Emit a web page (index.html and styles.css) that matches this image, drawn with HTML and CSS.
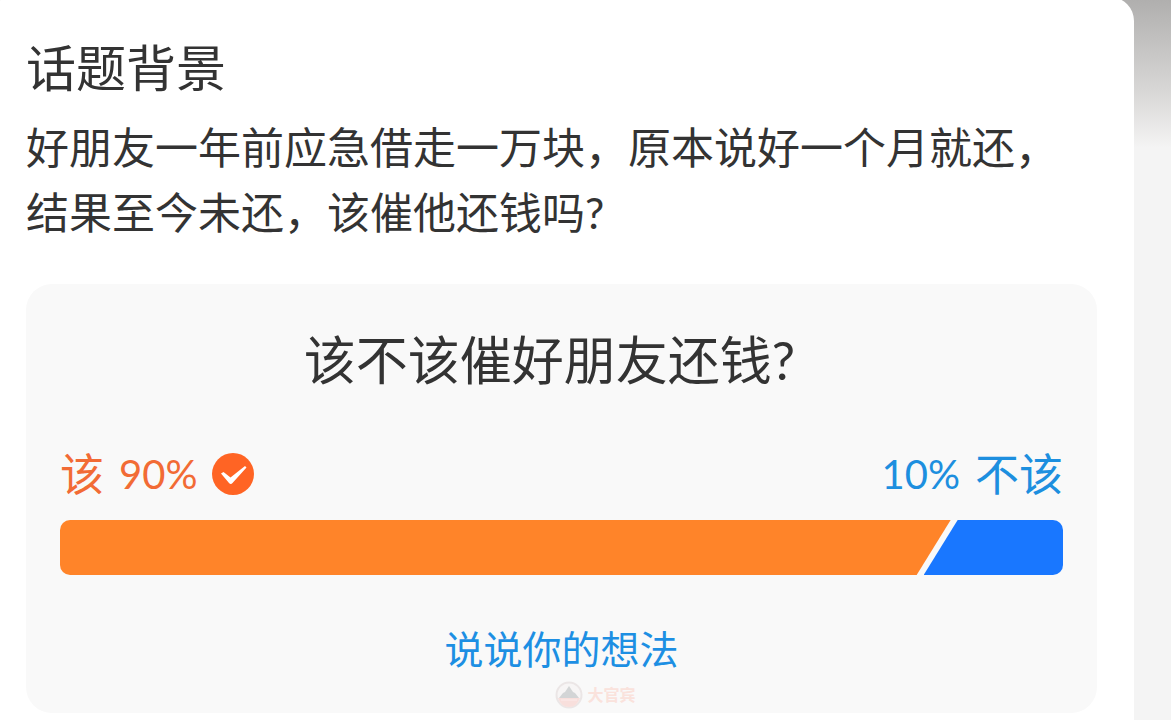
FILE: index.html
```html
<!DOCTYPE html>
<html lang="zh-CN">
<head>
<meta charset="utf-8">
<meta name="viewport" content="width=device-width, initial-scale=1">
<title>话题背景</title>
<link rel="stylesheet" href="styles.css">
</head>
<body>
<main class="card">
  <h1 class="card-title">话题背景</h1>
  <p class="card-text">好朋友一年前应急借走一万块，原本说好一个月就还，结果至今未还，该催他还钱吗?</p>
  <section class="poll">
    <h2 class="poll-title">该不该催好朋友还钱?</h2>
    <div class="labels">
      <div class="label label-yes">
        <span>该</span>
        <span class="percent">90%</span>
        <svg class="check" viewBox="0 0 42 42" aria-hidden="true">
          <circle cx="21" cy="21" r="21" fill="#ff6424"/>
          <path d="M9 20.500 L11.500 19 L18.500 24.500 L33 13 L34.500 14.500 L20.500 30 Q18.800 32 17 30 Z" fill="#fff"/>
        </svg>
      </div>
      <div class="label label-no">
        <span class="percent">10%</span>
        <span>不该</span>
      </div>
    </div>
    <div class="bar">
      <div class="bar-yes" style="width: 88.8%"></div>
      <div class="bar-no"></div>
    </div>
    <a class="link" href="#">说说你的想法</a>
    <div class="mark">
      <svg class="mark-logo" viewBox="0 0 28 28" aria-hidden="true">
        <circle cx="14" cy="14" r="12.500" fill="#f7f5f5" stroke="#ebe6e6" stroke-width="2"/>
        <path d="M4 17 L8 12 L10 11 L14 5 L18 11 L20 12 L24 17 Z" fill="#d3d5d6"/>
        <path d="M3 17 H25 Q22 26 14 26 Q6 26 3 17 Z" fill="#f8dfdc"/>
        <path d="M6 19 H22" stroke="#fbeceb" stroke-width="1"/>
      </svg>
      <span>大官宾</span>
    </div>
  </section>
</main>
</body>
</html>
```
FILE: styles.css
```css
* {
  box-sizing: border-box;
}

body {
  margin: 0;
  min-height: 100vh;
  overflow: hidden;
  display: flex;
  background: #f4f4f4 linear-gradient(#b0afae, #dcdbda 100px, #f4f4f4 148px) no-repeat;
  color: #333;
  font-family: Lato, "Noto Sans CJK SC", sans-serif;
}

.card {
  flex: 1;
  margin: -3px 37px 0 -12px;
  padding: 36px 37px 7px 38px;
  border-radius: 24px;
  border-bottom-left-radius: 0;
  border-bottom-right-radius: 0;
  background: #fff;
}

.card-title {
  margin: 0;
  font-size: 50px;
  font-weight: 400;
  line-height: 70px;
}

.card-text {
  margin: 12px 0 0;
  font-size: 43px;
  line-height: 65px;
}

.poll {
  position: relative;
  display: flex;
  flex-direction: column;
  margin-top: 39px;
  padding: 40px 34px 34px;
  border-radius: 26px;
  background: #f9f9f9;
}

.poll-title {
  margin: 0;
  padding-right: 24px;
  font-size: 52px;
  font-weight: 400;
  line-height: 72px;
  text-align: center;
}

.labels {
  display: flex;
  justify-content: space-between;
  margin-top: 48px;
  line-height: 60px;
}

.label {
  display: flex;
  align-items: center;
  gap: 15px;
  font-size: 44px;
}

.label-yes {
  color: #f26b35;
}

.label-no {
  color: #1d8fdf;
}

.percent {
  font-size: 40px;
}

.check {
  width: 42px;
  height: 42px;
}

.bar {
  display: flex;
  height: 55px;
  margin-top: 16px;
  border-radius: 10px;
  overflow: hidden;
}

.bar-yes {
  background: #ff8429;
  clip-path: polygon(0 0, 100% 0, calc(100% - 34px) 100%, 0 100%);
}

.bar-no {
  flex: 1;
  margin-left: -27px;
  background: #1977ff;
  clip-path: polygon(34px 0, 100% 0, 100% 100%, 0 100%);
}

.link {
  align-self: center;
  margin-top: 44px;
  color: #1d8fe3;
  font-size: 39px;
  line-height: 60px;
  text-decoration: none;
}

.mark {
  position: absolute;
  bottom: 4px;
  left: 50%;
  display: flex;
  align-items: center;
  gap: 5px;
  margin-left: -7px;
  color: #fae2dc;
  font-size: 16px;
  font-weight: 700;
  line-height: 28px;
}

.mark-logo {
  width: 28px;
  height: 28px;
}
```
